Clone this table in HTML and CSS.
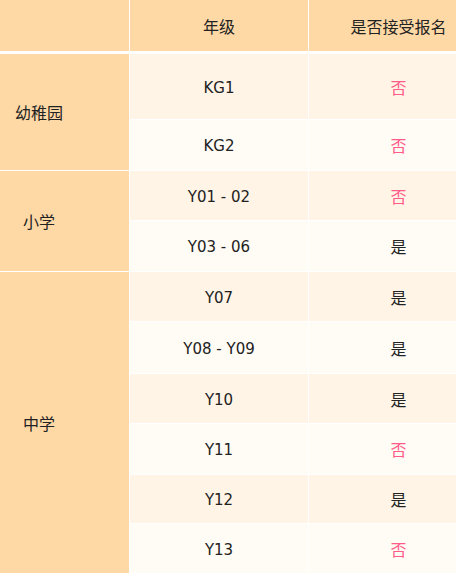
FILE: index.html
```html
<!DOCTYPE html>
<html lang="zh">
<head>
<meta charset="utf-8">
<link rel="stylesheet" href="styles.css">
</head>
<body>
<div class="table">
  <div class="cell head stage-head"></div>
  <div class="cell head">年级</div>
  <div class="cell head status">是否接受报名</div>

  <div class="cell stage s-kg">幼稚园</div>
  <div class="cell odd grade">KG1</div>
  <div class="cell odd status no">否</div>
  <div class="cell even grade">KG2</div>
  <div class="cell even status no">否</div>

  <div class="cell stage s-pri">小学</div>
  <div class="cell odd grade">Y01 - 02</div>
  <div class="cell odd status no">否</div>
  <div class="cell even grade">Y03 - 06</div>
  <div class="cell even status">是</div>

  <div class="cell stage s-sec">中学</div>
  <div class="cell odd grade">Y07</div>
  <div class="cell odd status">是</div>
  <div class="cell even grade">Y08 - Y09</div>
  <div class="cell even status">是</div>
  <div class="cell odd grade">Y10</div>
  <div class="cell odd status">是</div>
  <div class="cell even grade">Y11</div>
  <div class="cell even status no">否</div>
  <div class="cell odd grade">Y12</div>
  <div class="cell odd status">是</div>
  <div class="cell even grade">Y13</div>
  <div class="cell even status no">否</div>
</div>
</body>
</html>
```

FILE: styles.css
```css
html, body {
  margin: 0;
  padding: 0;
  overflow: hidden;
  background: #ffffff;
}

body {
  width: 456px;
  height: 573px;
  font-family: "Noto Sans CJK SC", "Noto Sans", sans-serif;
  font-size: 16px;
  color: #222222;
}

.table {
  display: grid;
  grid-template-columns: 129px 178px 147px;
  grid-template-rows: 53px 65px 50px 49px 50px 49px 51px 49px 50px 48px 50px;
  column-gap: 1px;
  row-gap: 1px;
  width: 456px;
  background: #ffffff;
}

.cell {
  display: flex;
  align-items: center;
  justify-content: center;
  text-align: center;
  line-height: 1;
  white-space: nowrap;
}

.head {
  background: #fed9a6;
  margin-bottom: 2px;
}

.stage {
  background: #fed9a6;
  padding-right: 51px;
}

.status {
  padding-left: 32px;
}

.grade {
  font-family: "DejaVu Sans", "Noto Sans CJK SC", sans-serif;
  font-size: 15px;
  padding-top: 3px;
}

.s-kg { grid-row: 2 / span 2; }
.s-pri { grid-row: 4 / span 2; }
.s-sec { grid-row: 6 / span 6; }
.stage-head { grid-column: 1; }
.s-kg, .s-pri, .s-sec { grid-column: 1; }

.odd { background: #fff4e6; }
.even { background: #fffbf5; }

.no { color: #ff5c8a; }
```
